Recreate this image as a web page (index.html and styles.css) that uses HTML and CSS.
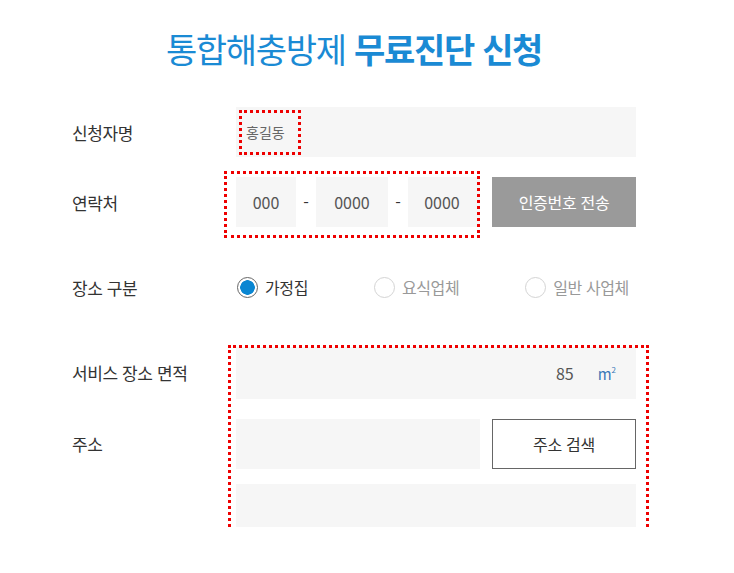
FILE: index.html
```html
<!DOCTYPE html>
<html lang="ko">
<head>
<meta charset="utf-8">
<title>무료진단 신청</title>
<link rel="stylesheet" href="styles.css">
</head>
<body>
<div class="page">
  <h1 class="title"><span class="t-light">통합해충방제</span> <span class="t-bold">무료진단 신청</span></h1>

  <div class="form">
    <div class="row row-name">
      <div class="label">신청자명</div>
      <div class="field field-name"><span class="mark-name">홍길동</span></div>
    </div>

    <div class="row row-phone">
      <div class="label">연락처</div>
      <div class="phone-group">
        <div class="field phone p1">000</div>
        <span class="dash">-</span>
        <div class="field phone p2">0000</div>
        <span class="dash">-</span>
        <div class="field phone p3">0000</div>
      </div>
      <button class="btn btn-gray" type="button">인증번호 전송</button>
    </div>

    <div class="row row-radio">
      <div class="label">장소 구분</div>
      <div class="radios">
        <label class="radio checked"><span class="dot"></span><span class="rtext">가정집</span></label>
        <label class="radio"><span class="dot"></span><span class="rtext">요식업체</span></label>
        <label class="radio"><span class="dot"></span><span class="rtext">일반 사업체</span></label>
      </div>
    </div>

    <div class="group">
      <div class="group-labels">
        <div class="label gl-area">서비스 장소 면적</div>
        <div class="label gl-addr">주소</div>
      </div>
      <div class="group-fields">
        <div class="field field-area"><span class="num">85</span><span class="unit">m<sup>2</sup></span></div>
        <div class="addr-row">
          <div class="field field-addr"></div>
          <button class="btn btn-line" type="button">주소 검색</button>
        </div>
        <div class="field field-addr2"></div>
      </div>
    </div>
  </div>
</div>
</body>
</html>
```

FILE: styles.css
```css
* { box-sizing: border-box; }
html, body { margin: 0; padding: 0; background: #fff; }
body {
  font-family: "Noto Sans CJK KR", "Noto Sans", sans-serif;
  color: #333;
}
.page {
  width: 564px;
  margin-left: 72px;
  padding-top: 24px;
}
.title {
  margin: 0;
  text-align: center;
  font-size: 34px;
  line-height: 50px;
  letter-spacing: -1.3px;
  color: #1a8ad4;
  font-weight: 400;
}
.t-bold { font-weight: 700; }

.form { margin-top: 33px; }
.row { display: flex; align-items: center; }
.label {
  width: 164px;
  flex: none;
  font-size: 17px;
  color: #333;
  letter-spacing: -0.4px;
}
.field { background: #f6f6f6; height: 50px; }

.field-name {
  flex: 1;
  display: flex;
  align-items: center;
  padding-left: 3px;
}
.mark-name {
  display: inline-block;
  border: 3px dotted #e00;
  width: 62px;
  height: 45px;
  line-height: 39px;
  padding-left: 4px;
  font-size: 14px;
  color: #666;
}

.row-phone { margin-top: 20px; }
.phone-group {
  position: relative;
  display: flex;
  align-items: center;
  width: 244px;
}
.phone-group::after {
  content: "";
  position: absolute;
  left: -12px; right: 0; top: -6px; bottom: -11px;
  border: 3px dotted #e00;
  pointer-events: none;
}
.phone {
  display: flex;
  align-items: center;
  justify-content: center;
  font-size: 16px;
  color: #555;
}
.p1 { width: 60px; }
.p2, .p3 { width: 72px; }
.p3 { padding-right: 4px; }
.dash { width: 20px; text-align: center; font-size: 16px; color: #333; }

.btn {
  font-family: inherit;
  font-size: 16px;
  height: 50px;
  width: 144px;
  margin-left: 12px;
  cursor: pointer;
  letter-spacing: -0.3px;
}
.btn-gray { background: #9a9a9a; color: #fff; border: 0; }
.btn-line { background: #fff; color: #333; border: 1px solid #666; }

.row-radio { margin-top: 35px; height: 50px; }
.radios { display: flex; align-items: center; gap: 66px; padding-left: 1px; }
.radio { display: flex; align-items: center; font-size: 16px; color: #999; letter-spacing: -0.4px; }
.dot {
  width: 21px; height: 21px;
  border-radius: 50%;
  border: 1px solid #d4d4d4;
  background: #fff;
  margin-right: 7px;
  flex: none;
}
.radio.checked { color: #333; }
.radio.checked .dot {
  border: 1.5px solid #666;
  background: radial-gradient(circle, #0a86d2 0 7px, #fff 7.5px);
}

.group { display: flex; margin-top: 35px; }
.group-labels { width: 164px; flex: none; }
.gl-area { height: 52px; line-height: 52px; }
.gl-addr { margin-top: 20px; height: 50px; line-height: 50px; }
.group-fields { position: relative; flex: 1; }
.group-fields::after {
  content: "";
  position: absolute;
  left: -8px; right: -13px; top: -2px; bottom: -6px;
  border: 3px dotted #e00;
  pointer-events: none;
}
.field-area {
  height: 52px;
  display: flex;
  align-items: center;
  justify-content: flex-end;
  padding-right: 20px;
}
.num { font-size: 16px; color: #555; margin-right: 24px; }
.unit { font-size: 15px; color: #3a78b8; }
.unit sup { font-size: 8px; vertical-align: 7px; }
.addr-row { display: flex; margin-top: 20px; }
.field-addr { width: 244px; }
.field-addr2 { margin-top: 15px; height: 43px; }
```
